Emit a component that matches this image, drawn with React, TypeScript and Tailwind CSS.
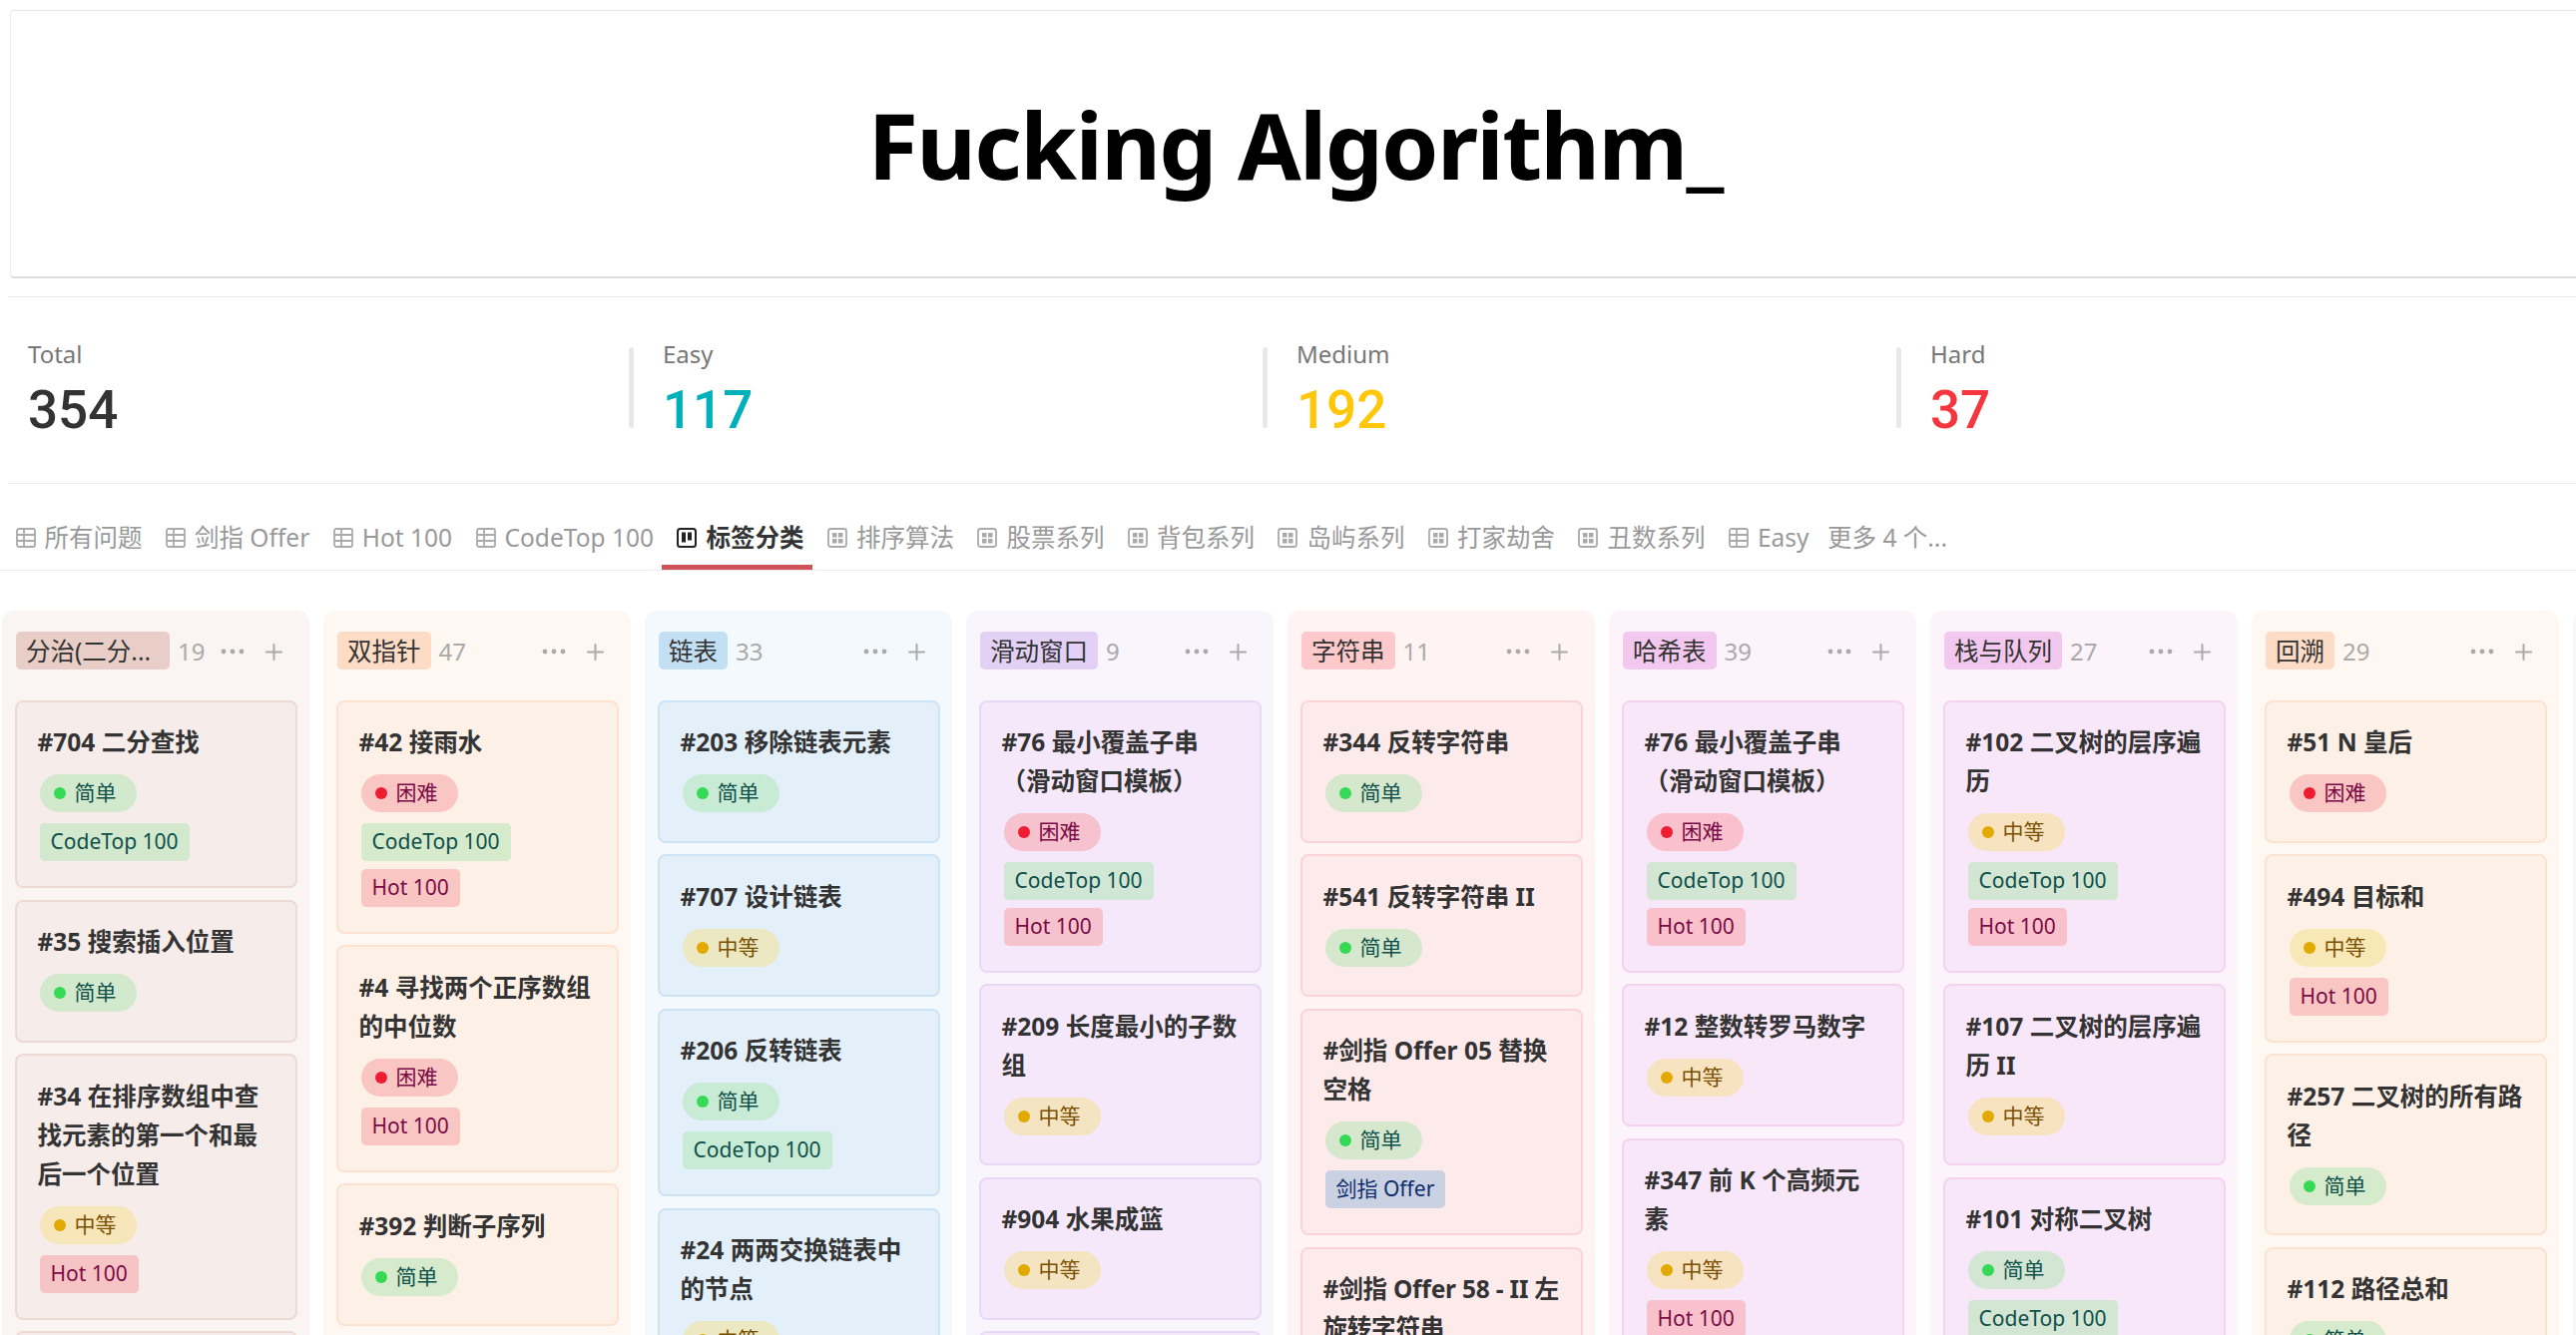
import React from "react";

type Level = "easy" | "medium" | "hard";

type Problem = {
  title: string;
  level: Level;
  tags?: string[];
  tight?: boolean;
};

type Column = {
  name: string;
  count: number;
  columnBg: string;
  cardBg: string;
  cardBorder: string;
  tagBg: string;
  problems: Problem[];
};

const minWindow = "#76 最小覆盖子串（滑动窗口模板）";

const columns: Column[] = [
  {
    name: "分治(二分...",
    count: 19,
    columnBg: "bg-[#faf4f3]",
    cardBg: "bg-[#f6ecea]",
    cardBorder: "border-[#eedad4]",
    tagBg: "bg-[#e8cec6] w-[154px]",
    problems: [
      { title: "#704 二分查找", level: "easy", tags: ["CodeTop 100"] },
      { title: "#35 搜索插入位置", level: "easy" },
      { title: "#34 在排序数组中查找元素的第一个和最后一个位置", level: "medium", tags: ["Hot 100"] },
      { title: "#33 搜索旋转排序数组", level: "medium" },
    ],
  },
  {
    name: "双指针",
    count: 47,
    columnBg: "bg-[#fff7f2]",
    cardBg: "bg-[#fdf0e7]",
    cardBorder: "border-[#fce2d0]",
    tagBg: "bg-[#fddcc5]",
    problems: [
      { title: "#42 接雨水", level: "hard", tags: ["CodeTop 100", "Hot 100"] },
      { title: "#4 寻找两个正序数组的中位数", level: "hard", tags: ["Hot 100"] },
      { title: "#392 判断子序列", level: "easy" },
    ],
  },
  {
    name: "链表",
    count: 33,
    columnBg: "bg-[#f4f9fd]",
    cardBg: "bg-[#e3f0fa]",
    cardBorder: "border-[#cce2f5]",
    tagBg: "bg-[#c3dff3]",
    problems: [
      { title: "#203 移除链表元素", level: "easy" },
      { title: "#707 设计链表", level: "medium" },
      { title: "#206 反转链表", level: "easy", tags: ["CodeTop 100"] },
      { title: "#24 两两交换链表中的节点", level: "medium" },
    ],
  },
  {
    name: "滑动窗口",
    count: 9,
    columnBg: "bg-[#f9f5fd]",
    cardBg: "bg-[#f4e8fa]",
    cardBorder: "border-[#e8d8f5]",
    tagBg: "bg-[#e2d0f5]",
    problems: [
      { title: minWindow, level: "hard", tags: ["CodeTop 100", "Hot 100"] },
      { title: "#209 长度最小的子数组", level: "medium" },
      { title: "#904 水果成篮", level: "medium" },
      { title: "#3 无重复字符的最长子串", level: "medium" },
    ],
  },
  {
    name: "字符串",
    count: 11,
    columnBg: "bg-[#fff4f3]",
    cardBg: "bg-[#fdeaeb]",
    cardBorder: "border-[#fcd4d7]",
    tagBg: "bg-[#fdc9cb]",
    problems: [
      { title: "#344 反转字符串", level: "easy" },
      { title: "#541 反转字符串 II", level: "easy" },
      { title: "#剑指 Offer 05 替换空格", level: "easy", tags: ["剑指 Offer"] },
      { title: "#剑指 Offer 58 - II 左旋转字符串", level: "easy", tight: true },
    ],
  },
  {
    name: "哈希表",
    count: 39,
    columnBg: "bg-[#fdf3fb]",
    cardBg: "bg-[#f8e7f8]",
    cardBorder: "border-[#f4d2f0]",
    tagBg: "bg-[#f3c8ee]",
    problems: [
      { title: minWindow, level: "hard", tags: ["CodeTop 100", "Hot 100"] },
      { title: "#12 整数转罗马数字", level: "medium" },
      { title: "#347 前 K 个高频元素", level: "medium", tags: ["Hot 100"] },
    ],
  },
  {
    name: "栈与队列",
    count: 27,
    columnBg: "bg-[#fdf3fb]",
    cardBg: "bg-[#f8e7f8]",
    cardBorder: "border-[#f4d2f0]",
    tagBg: "bg-[#f3c8ee]",
    problems: [
      { title: "#102 二叉树的层序遍历", level: "medium", tags: ["CodeTop 100", "Hot 100"] },
      { title: "#107 二叉树的层序遍历 II", level: "medium" },
      { title: "#101 对称二叉树", level: "easy", tags: ["CodeTop 100"] },
    ],
  },
  {
    name: "回溯",
    count: 29,
    columnBg: "bg-[#fff7f2]",
    cardBg: "bg-[#fdf0e7]",
    cardBorder: "border-[#fce2d0]",
    tagBg: "bg-[#fddcc5]",
    problems: [
      { title: "#51 N 皇后", level: "hard" },
      { title: "#494 目标和", level: "medium", tags: ["Hot 100"] },
      { title: "#257 二叉树的所有路径", level: "easy" },
      { title: "#112 路径总和", level: "easy" },
    ],
  },
];

const levels = {
  easy: { label: "简单", bg: "bg-[rgba(174,230,176,0.5)]", text: "text-[#0f4f4a]", dot: "bg-[#35d955]" },
  medium: { label: "中等", bg: "bg-[rgba(246,224,136,0.5)]", text: "text-[#7a4f00]", dot: "bg-[#e2a900]" },
  hard: { label: "困难", bg: "bg-[rgba(247,156,159,0.5)]", text: "text-[#7b0b46]", dot: "bg-[#ee1c30]" },
};

const tagStyles: Record<string, string> = {
  "CodeTop 100": "bg-[rgba(174,230,176,0.5)] text-[#0f4f4a]",
  "Hot 100": "bg-[rgba(247,156,159,0.5)] text-[#7b0b46]",
  "剑指 Offer": "bg-[rgba(149,184,217,0.5)] text-[#0d2d6b]",
};

const tabs = [
  { label: "所有问题", icon: "table" },
  { label: "剑指 Offer", icon: "table" },
  { label: "Hot 100", icon: "table" },
  { label: "CodeTop 100", icon: "table" },
  { label: "标签分类", icon: "board", active: true },
  { label: "排序算法", icon: "gallery" },
  { label: "股票系列", icon: "gallery" },
  { label: "背包系列", icon: "gallery" },
  { label: "岛屿系列", icon: "gallery" },
  { label: "打家劫舍", icon: "gallery" },
  { label: "丑数系列", icon: "gallery" },
  { label: "Easy", icon: "table" },
];

const stats = [
  { label: "Total", value: 354, color: "text-[#333333]", box: "w-[624px] pl-5" },
  { label: "Easy", value: 117, color: "text-[#00b0ba]", box: "w-[635px] pl-8" },
  { label: "Medium", value: 192, color: "text-[#ffc60a]", box: "w-[635px] pl-8" },
  { label: "Hard", value: 37, color: "text-[#f5363f]", box: "w-[635px] pl-8" },
];

function TabIcon({ type }: { type: string }) {
  if (type === "board") {
    return (
      <svg width="20" height="24" viewBox="0 0 20 24" className="shrink-0 text-[#222222]" fill="none">
        <rect x="1" y="3" width="18" height="18" rx="2.5" stroke="currentColor" strokeWidth="2" />
        <rect x="5" y="6.5" width="4" height="10" fill="currentColor" />
        <rect x="11" y="6.5" width="4" height="8" fill="currentColor" />
      </svg>
    );
  }
  if (type === "gallery") {
    return (
      <svg width="20" height="24" viewBox="0 0 20 24" className="shrink-0 text-[#aaaaaa]" fill="none">
        <rect x="1" y="3" width="18" height="18" rx="2.5" stroke="currentColor" strokeWidth="1.8" />
        <rect x="5" y="7" width="4.5" height="4.5" fill="currentColor" />
        <rect x="11" y="7" width="4.5" height="4.5" fill="currentColor" />
        <rect x="5" y="13" width="4.5" height="4.5" fill="currentColor" />
        <rect x="11" y="13" width="4.5" height="4.5" fill="currentColor" />
      </svg>
    );
  }
  return (
    <svg width="20" height="24" viewBox="0 0 20 24" className="shrink-0 text-[#aaaaaa]" fill="none">
      <rect x="1" y="3" width="18" height="18" rx="2" stroke="currentColor" strokeWidth="1.8" />
      <path d="M1 9h18M1 15h18M8 3v18" stroke="currentColor" strokeWidth="1.8" />
    </svg>
  );
}

function ProblemCard({ problem, column }: { problem: Problem; column: Column }) {
  const level = levels[problem.level];
  return (
    <div className={`${column.cardBg} ${column.cardBorder} border-2 rounded-[8px] pt-[20.5px] pl-[21px] pr-[19.5px] pb-[17.5px]`}>
      <p className={`text-[24.5px] leading-[39px] font-bold text-[#333333] mb-[13px] ${problem.tight ? "tracking-[-0.2px]" : ""}`}>
        {problem.title}
      </p>
      <div className="pl-[2px]">
        <div className={`${level.bg} ${level.text} w-fit h-[38px] rounded-full pl-[14px] pr-[20px] mb-[11px] flex items-center gap-[9px] text-[21px]`}>
          <span className={`${level.dot} w-[12px] h-[12px] rounded-full`} />
          {level.label}
        </div>
        {problem.tags?.map((tag) => (
          <div key={tag} className={`${tagStyles[tag]} w-fit h-[38px] rounded-[5px] px-[11px] mb-[7.5px] flex items-center text-[21px]`}>
            {tag}
          </div>
        ))}
      </div>
    </div>
  );
}

function BoardColumn({ column }: { column: Column }) {
  return (
    <div className={`${column.columnBg} w-[308px] shrink-0 rounded-t-[12px] pt-[21px] px-[12.5px]`}>
      <div className="flex items-center h-[38px] pl-[1.5px] pr-[15px] mb-[30.5px]">
        <span className={`${column.tagBg} whitespace-nowrap h-[38px] leading-[40px] rounded-[5px] px-[10px] text-[24.5px] text-[#333333]`}>
          {column.name}
        </span>
        <span className="ml-[8px] mt-[2px] text-[24px] text-[#aaaaaa]">{column.count}</span>
        <span className="ml-auto mt-[2px] flex items-center gap-[21px] text-[#aaaaaa]">
          <svg width="24" height="6" viewBox="0 0 24 6" fill="currentColor">
            <circle cx="3" cy="3" r="2.4" />
            <circle cx="12" cy="3" r="2.4" />
            <circle cx="21" cy="3" r="2.4" />
          </svg>
          <svg width="17" height="17" viewBox="0 0 17 17" fill="currentColor">
            <rect x="7.5" y="0" width="2" height="17" rx="1" />
            <rect x="0" y="7.5" width="17" height="2" rx="1" />
          </svg>
        </span>
      </div>
      <div className="flex flex-col gap-[11.5px]">
        {column.problems.map((problem) => (
          <ProblemCard key={problem.title} problem={problem} column={column} />
        ))}
      </div>
    </div>
  );
}

export default function App() {
  return (
    <div className="w-[2581px] h-[1338px] overflow-hidden bg-white font-['Noto_Sans','Noto_Sans_CJK_SC',sans-serif]">
      <div className="pt-[10px] pl-[10px] w-[2590px]">
        <div className="h-[269px] rounded-[4px] border-t-[1.5px] border-b-2 border-l border-t-[#e6e6e6] border-b-[#dddddd] border-l-[#eeeeee] flex items-center justify-center">
          <h1 className="text-[92px] leading-none font-bold tracking-[-1.7px] text-black pt-[2px] pr-[6px]">Fucking Algorithm_</h1>
        </div>
      </div>

      <div className="mt-[18px] ml-[8px] h-[188px] border-y-[1.5px] border-[#ebebeb] flex items-center">
        {stats.map((stat, i) => (
          <div key={stat.label} className={`${stat.box} relative shrink-0 pb-[3px]`}>
            {i > 0 && <span className="absolute -left-[2px] top-[7.5px] h-[81px] w-[5px] rounded-full bg-[#e8e8e8]" />}
            <div className="text-[24px] leading-[30px] text-[#777777]">{stat.label}</div>
            <div className={`${stat.color} mt-[13px] text-[53px] leading-[56px] font-medium font-['Roboto',sans-serif]`}>{stat.value}</div>
          </div>
        ))}
      </div>

      <div className="h-[87px] border-b-[1.5px] border-[#ebebeb] flex items-end pl-[0.5px]">
        {tabs.map((tab) => (
          <div
            key={tab.label}
            className={`h-[87px] pt-[37px] pl-[15px] pr-[8.5px] flex items-start gap-[9px] text-[24.5px] leading-[36px] border-b-[5px] ${tab.active ? "border-[#cf5358] text-[#333333] font-bold" : "border-transparent text-[#999999]"}`}
          >
            <span className="h-[36px] flex items-center">
              <TabIcon type={tab.icon} />
            </span>
            {tab.label}
          </div>
        ))}
        <div className="h-[87px] pt-[37px] pl-[10px] text-[24.5px] leading-[36px] text-[#999999]">更多 4 个...</div>
      </div>

      <div className="mt-[40px] pl-[2px] flex items-stretch gap-[14px] h-[900px]">
        {columns.map((column) => (
          <BoardColumn key={column.name} column={column} />
        ))}
        <div className="w-[308px] shrink-0 rounded-t-[12px] bg-[#f8f8f8]" />
      </div>
    </div>
  );
}
